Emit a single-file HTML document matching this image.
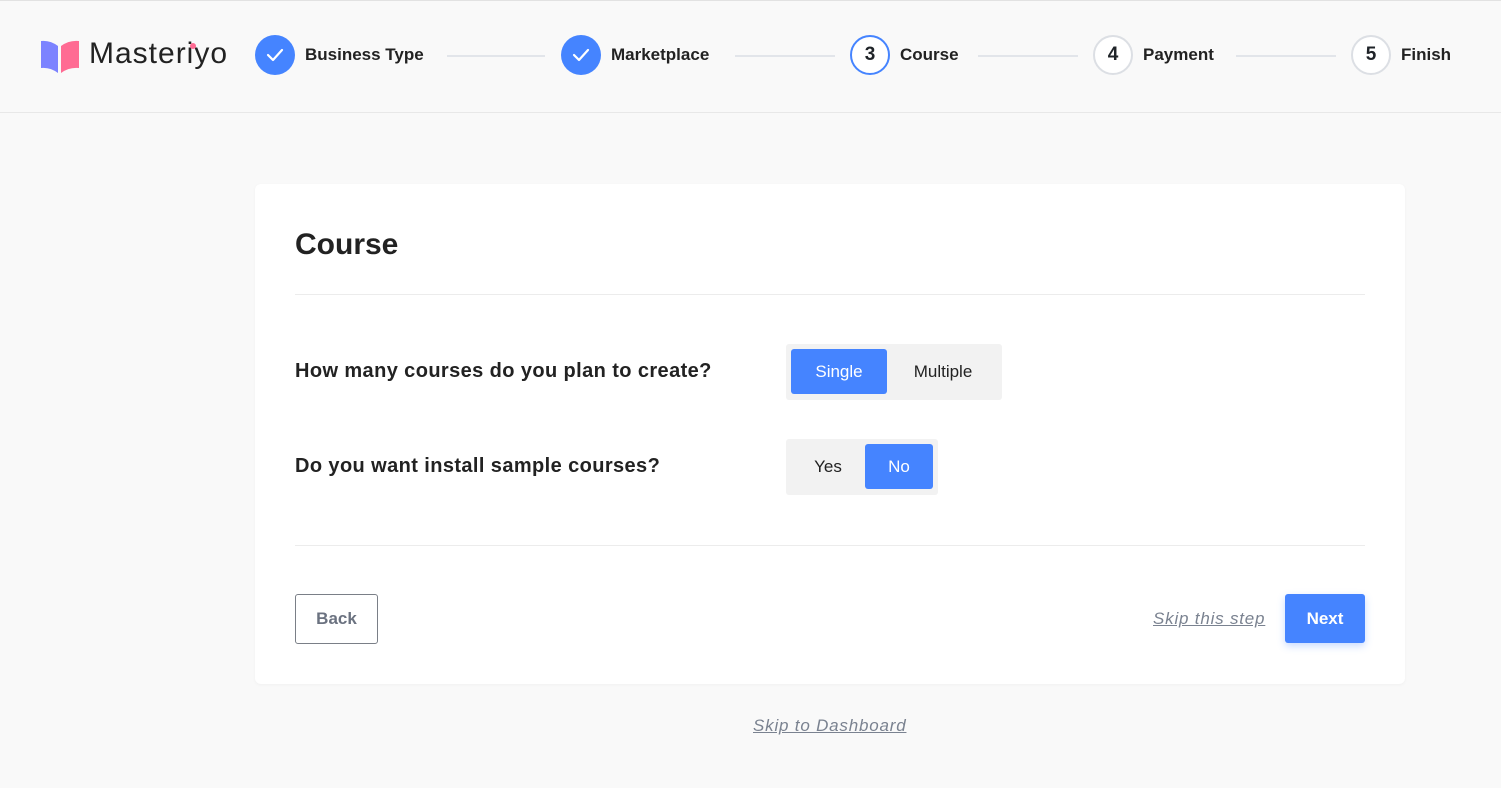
<!DOCTYPE html>
<html><head><style>
*{box-sizing:border-box;margin:0;padding:0}
body{width:1501px;height:788px;background:#f9f9f9;font-family:"Liberation Sans",sans-serif;position:relative;overflow:hidden;color:#1f2328}
.hdr{position:absolute;left:0;top:0;width:1501px;height:113px;border-top:1px solid #e2e2e2;border-bottom:1px solid #e8e8e8;background:#f9f9f9}
.a{position:absolute}
.c{position:absolute;top:34px;width:40px;height:40px;border-radius:50%;display:flex;align-items:center;justify-content:center;font-size:19px;font-weight:bold}
.done{background:#4584ff}
.cur{border:2px solid #4584ff;color:#1f2328;background:#fff}
.todo{border:2px solid #dcdfe4;color:#1f2328;background:#fff}
.lbl{position:absolute;top:44px;font-size:17px;font-weight:bold;color:#222}
.ln{position:absolute;top:54px;height:2px;background:#e2e5ea}
.card{position:absolute;left:255px;top:184px;width:1150px;height:500px;background:#fff;border-radius:6px;box-shadow:0 1px 3px rgba(0,0,0,.04)}
.q{position:absolute;left:40px;font-size:20px;font-weight:bold;color:#222;letter-spacing:0.4px}
.seg{position:absolute;background:#f2f2f2;border-radius:3px}
.opt{position:absolute;top:5px;height:45px;display:flex;align-items:center;justify-content:center;font-size:17px;color:#222;border-radius:3px}
.on{background:#4584ff;color:#fff}
</style></head><body>
<div class="hdr">
<svg class="a" style="left:39px;top:37px" width="42" height="36" viewBox="0 0 42 36">
<path d="M2 3 Q11 2 19 8 L19 35 Q11 29 2 30Z" fill="#7c83ff"/>
<path d="M22 8 Q30 2 40 3 L40 30 Q30 29 22 35Z" fill="#ff6b93"/>
</svg>
<div class="a" style="left:89px;top:36px;font-size:30px;color:#222;letter-spacing:1px">Masteriyo</div>
<div class="a" style="left:190px;top:42px;width:6px;height:6px;border-radius:50%;background:#ff6b93"></div>
<div class="c done" style="left:255px"><svg width="18" height="14" viewBox="0 0 18 14"><path d="M2 7 L7 12 L16 2" stroke="#fff" stroke-width="2.2" fill="none" stroke-linecap="round" stroke-linejoin="round"/></svg></div>
<div class="lbl" style="left:305px">Business Type</div>
<div class="ln" style="left:447px;width:98px"></div>
<div class="c done" style="left:561px"><svg width="18" height="14" viewBox="0 0 18 14"><path d="M2 7 L7 12 L16 2" stroke="#fff" stroke-width="2.2" fill="none" stroke-linecap="round" stroke-linejoin="round"/></svg></div>
<div class="lbl" style="left:611px">Marketplace</div>
<div class="ln" style="left:735px;width:100px"></div>
<div class="c cur" style="left:850px">3</div>
<div class="lbl" style="left:900px">Course</div>
<div class="ln" style="left:978px;width:100px"></div>
<div class="c todo" style="left:1093px">4</div>
<div class="lbl" style="left:1143px">Payment</div>
<div class="ln" style="left:1236px;width:100px"></div>
<div class="c todo" style="left:1351px">5</div>
<div class="lbl" style="left:1401px">Finish</div>
</div>
<div class="card">
<div class="a" style="left:40px;top:44px;font-size:30px;font-weight:bold;color:#222">Course</div>
<div class="a" style="left:40px;top:110px;width:1070px;height:1px;background:#ececec"></div>
<div class="q" style="top:176px">How many courses do you plan to create?</div>
<div class="seg" style="left:531px;top:160px;width:216px;height:56px">
<div class="opt on" style="left:5px;width:96px">Single</div>
<div class="opt" style="left:104px;width:106px">Multiple</div></div>
<div class="q" style="top:271px">Do you want install sample courses?</div>
<div class="seg" style="left:531px;top:255px;width:152px;height:56px">
<div class="opt" style="left:5px;width:74px">Yes</div>
<div class="opt on" style="left:79px;width:68px">No</div></div>
<div class="a" style="left:40px;top:361px;width:1070px;height:1px;background:#ececec"></div>
<div class="a" style="left:40px;top:410px;width:83px;height:50px;border:1px solid #7a7f87;border-radius:3px;display:flex;align-items:center;justify-content:center;font-size:17px;font-weight:bold;color:#6b7280">Back</div>
<div class="a" style="left:898px;top:425px;font-size:17px;font-style:italic;color:#7a8290;text-decoration:underline;letter-spacing:0.8px">Skip this step</div>
<div class="a" style="left:1030px;top:410px;width:80px;height:49px;background:#4584ff;border-radius:3px;display:flex;align-items:center;justify-content:center;font-size:17px;font-weight:bold;color:#fff;box-shadow:0 3px 8px rgba(69,132,255,.3)">Next</div>
</div>
<div class="a" style="left:753px;top:716px;font-size:17px;font-style:italic;color:#7a8290;text-decoration:underline;letter-spacing:0.8px">Skip to Dashboard</div>
</body></html>
